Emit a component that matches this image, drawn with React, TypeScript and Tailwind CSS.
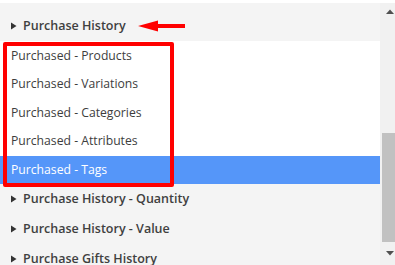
import React from 'react';

const Caret: React.FC = () => (
  <svg width="6" height="8" viewBox="0 0 6 8" className="shrink-0">
    <path d="M0 0.5 L5.5 4 L0 7.5 Z" fill="#333" />
  </svg>
);

const GroupRow: React.FC<{ label: string; className?: string }> = ({ label, className = '' }) => (
  <div className={`flex items-center gap-[6px] pl-[11px] h-[30px] ${className}`}>
    <Caret />
    <span className="text-[12.5px] font-semibold text-[#404040]">{label}</span>
  </div>
);

const items = [
  'Purchased - Products',
  'Purchased - Variations',
  'Purchased - Categories',
  'Purchased - Attributes',
  'Purchased - Tags',
];

const App: React.FC = () => {
  const selected = 4;

  return (
    <div
      className="w-[395px] h-[265px] bg-white pt-[3px] overflow-hidden"
      style={{ fontFamily: '"Open Sans", "Noto Sans", sans-serif' }}
    >
      <div className="flex h-[262px]">
        <div className="relative flex-1 bg-[#f4f4f4]">
          <GroupRow label="Purchase History" className="mt-[8px]" />
          <div className="bg-white pt-[1px]">
            {items.map((item, i) => (
              <div
                key={item}
                className={`flex items-center pl-[11px] h-[28.4px] text-[12.2px] ${
                  i === selected ? 'bg-[#5596f9] text-white' : 'text-[#3d3d3d]'
                }`}
              >
                {item}
              </div>
            ))}
          </div>
          <GroupRow label="Purchase History - Quantity" />
          <GroupRow label="Purchase History - Value" />
          <GroupRow label="Purchase Gifts History" />

          {/* annotation overlay */}
          <div className="absolute left-[3px] top-[39px] w-[171px] h-[145px] border-[4px] border-[#ff0000] rounded-[2px]" />
          <svg className="absolute left-[137px] top-[16px]" width="50" height="14" viewBox="0 0 50 14">
            <path d="M1 7 L21 1.5 L21 5 L48 5 L48 9 L21 9 L21 12.5 Z" fill="#ff0000" />
          </svg>
        </div>

        <div className="w-[15px] bg-[#f1f1f1] flex flex-col">
          <div className="h-[17px] flex items-center justify-end pr-[1px]">
            <svg width="8" height="5" viewBox="0 0 8 5">
              <path d="M0 5 L4 0.5 L8 5 Z" fill="#505050" />
            </svg>
          </div>
          <div className="flex-1 pl-[2px] pt-[113px] pb-[3px]">
            <div className="h-[109px] bg-[#c1c1c1]" />
          </div>
          <div className="h-[20px] flex items-center justify-end pr-[1px] pb-[3px]">
            <svg width="8" height="5" viewBox="0 0 8 5">
              <path d="M0 0 L8 0 L4 4.5 Z" fill="#505050" />
            </svg>
          </div>
        </div>
      </div>
    </div>
  );
};

export default App;
